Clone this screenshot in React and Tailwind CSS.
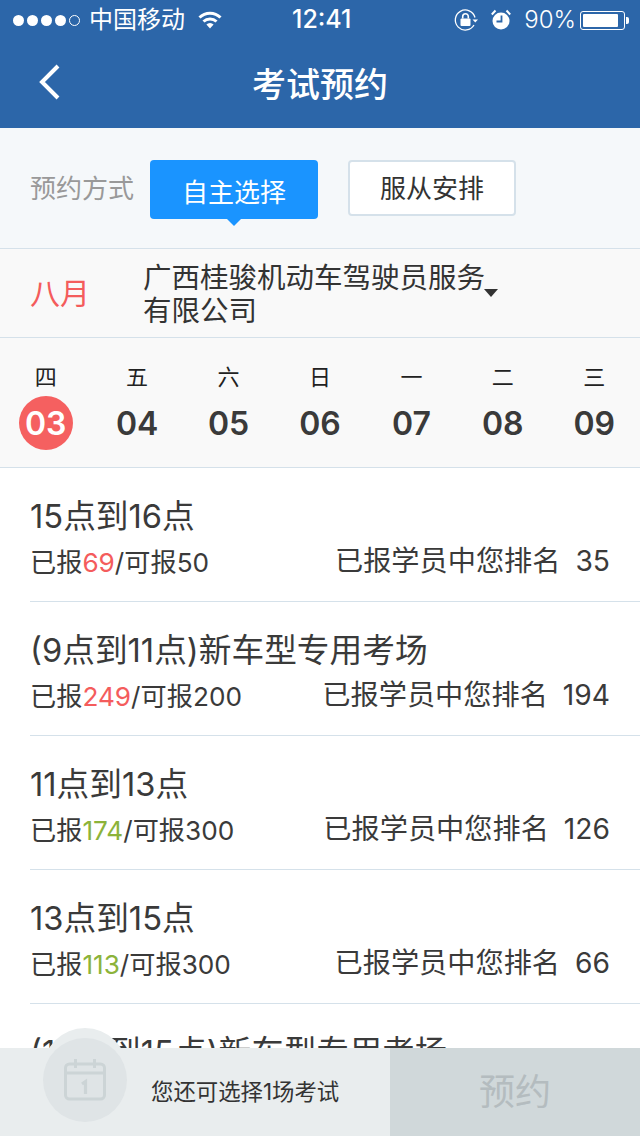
import React from "react";

const days = [
  { w: "四", d: "03", active: true },
  { w: "五", d: "04" },
  { w: "六", d: "05" },
  { w: "日", d: "06" },
  { w: "一", d: "07" },
  { w: "二", d: "08" },
  { w: "三", d: "09" },
];

const rows = [
  { title: "15点到16点", signed: "69", hot: true, total: "50", rank: "35" },
  { title: "(9点到11点)新车型专用考场", signed: "249", hot: true, total: "200", rank: "194" },
  { title: "11点到13点", signed: "174", total: "300", rank: "126" },
  { title: "13点到15点", signed: "113", total: "300", rank: "66" },
  { title: "(13点到15点)新车型专用考场", signed: "88", total: "100", rank: "12" },
];

function StatusBar() {
  return (
    <div className="h-10 flex items-center text-white text-[24px] relative">
      <div className="flex items-center gap-[3px] pl-[13px]">
        {[0, 1, 2, 3].map(i => (
          <span key={i} className="w-[11px] h-[11px] rounded-full bg-white" />
        ))}
        <span className="w-[11px] h-[11px] rounded-full border border-white" />
      </div>
      <span className="ml-[9px]">中国移动</span>
      <svg className="ml-[13px]" width="24" height="18" viewBox="0 0 24 18" fill="none" stroke="white" strokeWidth="3">
        <path d="M1.5 6.5a15 15 0 0 1 21 0" />
        <path d="M5.5 10.5a9.5 9.5 0 0 1 13 0" />
        <path d="M12 17.5l-3.6-4a5 5 0 0 1 7.2 0z" fill="white" stroke="none" />
      </svg>
      <span className="absolute left-[292px] font-medium text-[25px]">12:41</span>
      <div className="ml-auto flex items-center pr-[11px]">
        <svg width="24" height="24" viewBox="0 0 24 24" fill="none" stroke="white" strokeWidth="1.3">
          <path d="M21 9.5A10 10 0 1 0 20 17" />
          <path d="M18.5 11.5h5.5l-2.7 3z" fill="white" stroke="none" />
          <rect x="6.5" y="10.5" width="10" height="7.5" rx="1" fill="white" stroke="none" />
          <path d="M8.7 10.5V8.5a2.8 2.8 0 0 1 5.6 0v2" strokeWidth="1.6" />
        </svg>
        <svg className="ml-[13px]" width="20" height="22" viewBox="0 0 20 22" fill="white">
          <circle cx="10" cy="12" r="8.5" />
          <path d="M10.5 6.5v6H5.5" fill="none" stroke="#2c66a9" strokeWidth="1.8" />
          <path d="M0.8 5.5L4.5 1.5M19.2 5.5L15.5 1.5" stroke="white" strokeWidth="2" />
        </svg>
        <span className="ml-[13px] font-light">90%</span>
        <div className="ml-[4px] w-[45px] h-[19px] border border-white rounded-[3px] p-[2px]">
          <div className="h-full w-[90%] bg-white rounded-[1px]" />
        </div>
        <span className="w-[3px] h-[7px] bg-white rounded-r-[2px] ml-[1px]" />
      </div>
    </div>
  );
}

function Row({ row }) {
  return (
    <div className="h-[134px] ml-[30px] border-b border-[#d5e1ea] pt-[28px] text-[#3a3a3a]">
      <div className="text-[32.7px] leading-[40px]">{row.title}</div>
      <div className="flex justify-between items-center pr-[30px] mt-[6px] leading-[36px]">
        <span className="text-[26.2px] mt-[3px]">
          已报<span className={row.hot ? "text-[#f45c5c]" : "text-[#8cb33a]"}>{row.signed}</span>/可报{row.total}
        </span>
        <span className="text-[28.2px] -mt-[2px]">
          已报学员中您排名<span className="ml-[15px]">{row.rank}</span>
        </span>
      </div>
    </div>
  );
}

export default function App() {
  return (
    <div
      className="relative w-[640px] h-[1136px] overflow-hidden bg-white"
      style={{ fontFamily: '"Inter", "Noto Sans CJK SC", sans-serif' }}
    >
      <div className="h-[128px] bg-[#2c66a9]">
        <StatusBar />
        <div className="h-[88px] flex items-center justify-center relative">
          <svg className="absolute left-[38px] top-[24px]" width="24" height="36" viewBox="0 0 24 36" fill="none" stroke="white" strokeWidth="4">
            <path d="M20 2L4 18l16 16" />
          </svg>
          <span className="text-white text-[34px] font-medium mt-[1px]">考试预约</span>
        </div>
      </div>

      <div className="h-[121px] bg-[#f5f8fa] border-b border-[#d5e1ea] flex items-center pl-[30px]">
        <span className="text-[26px] text-[#999] w-[120px]">预约方式</span>
        <div className="relative w-[168px] h-[59px] mt-[2px] bg-[#1a94ff] rounded-[4px] text-white text-[26px] flex items-center justify-center pt-[6px]">
          自主选择
          <span className="absolute left-1/2 -ml-[7px] -bottom-[7px] border-x-[7px] border-x-transparent border-t-[7px] border-t-[#1a94ff]" />
        </div>
        <div className="ml-[30px] w-[168px] h-[56px] bg-white border-2 border-[#d5e1ea] rounded-[4px] text-[#333] text-[26px] flex items-center justify-center">
          服从安排
        </div>
      </div>

      <div className="h-[89px] bg-[#f9f9f9] border-b border-[#d5e1ea] flex items-center pl-[30px]">
        <span className="text-[30px] text-[#f45c5c] w-[113px]">八月</span>
        <div className="w-[345px] text-[28.5px] leading-[33px] text-[#333] mt-[2px]">广西桂骏机动车驾驶员服务有限公司</div>
        <span className="mt-[0px] ml-[-4px] border-x-[7px] border-x-transparent border-t-[8px] border-t-[#333]" />
      </div>

      <div className="h-[130px] bg-[#f9f9f9] border-b border-[#d5e1ea] flex pt-[26px] justify-between">
        {days.map(day => (
          <div key={day.d} className="w-[91.4px] flex flex-col items-center text-[#3a3a3a]">
            <span className="text-[22px] leading-[26px] text-[#222]">{day.w}</span>
            <span
              className={
                "mt-[6px] w-[54px] h-[54px] rounded-full flex items-center justify-center text-[32px] font-semibold pt-[1px] " +
                (day.active ? "bg-[#f56060] text-white" : "")
              }
            >
              {day.d}
            </span>
          </div>
        ))}
      </div>

      {rows.map(row => (
        <Row key={row.title} row={row} />
      ))}

      <div className="absolute left-0 right-0 bottom-0 h-[88px] flex">
        <div className="w-[390px] bg-[#e9edee] pl-[151px] flex items-center text-[22.4px] text-[#333]">
          您还可选择1场考试
        </div>
        <div className="flex-1 bg-[#d0d8da] flex items-center justify-center text-[36px] text-[#b4bcbf] pb-[1px]">预约</div>
      </div>

      {/* two discs, the lighter one peeks out above the bar */}
      <div className="absolute left-[43px] top-[1028px] w-[84px] h-[84px] rounded-full bg-[#e9edee]" />
      <div className="absolute left-[43px] top-[1038px] w-[84px] h-[84px] rounded-full bg-[#dfe4e6] flex items-center justify-center">
        <svg width="42" height="42" viewBox="0 0 42 42" fill="none" stroke="#ccd4d6" strokeWidth="3">
          <rect x="1.5" y="5" width="39" height="35" rx="4" />
          <path d="M1.5 14h39M11.5 0v9M30.5 0v9" />
          <path d="M18 25l3.5-2.5V35" strokeWidth="3.2" />
        </svg>
      </div>
    </div>
  );
}
